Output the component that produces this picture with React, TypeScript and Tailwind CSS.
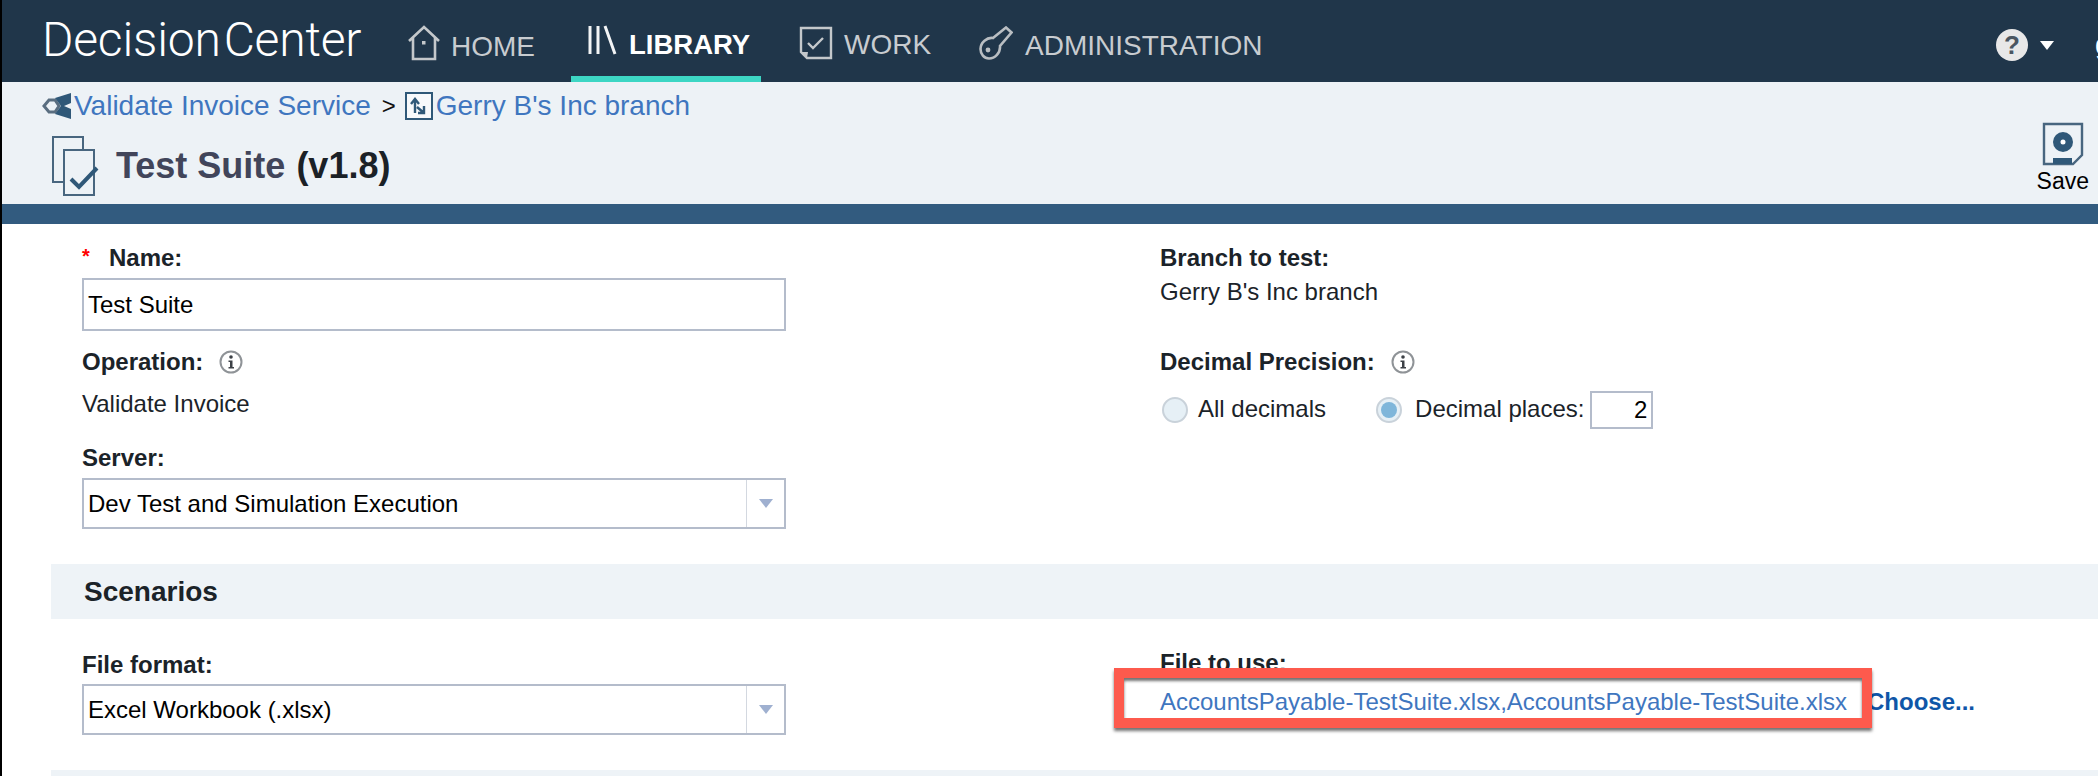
import React from "react";

const labelCls = "text-[24px] font-bold text-[#1b2329] leading-none";
const valueCls = "text-[24px] text-[#1b2329] leading-none";

const HomeIcon = () => (
  <svg width="34" height="36" viewBox="0 0 34 36" fill="none" stroke="#c4c8cb" strokeWidth="2.6">
    <path d="M2 16 L17 2 L32 16 M6 13 V34 H28 V13" />
    <rect x="15" y="16" width="3.5" height="3.5" fill="#c4c8cb" stroke="none" />
  </svg>
);

const LibraryIcon = () => (
  <svg width="30" height="30" viewBox="0 0 30 30" fill="none" stroke="#f2f4f5" strokeWidth="3">
    <path d="M3 1 V29 M11 1 V29 M18 1 L28 29" />
  </svg>
);

const WorkIcon = () => (
  <svg width="34" height="34" viewBox="0 0 34 34" fill="none" stroke="#c4c8cb" strokeWidth="2.4">
    <path d="M2 2 H32 V32 H8 L2 26 Z" />
    <path d="M9 26 L2 26 L8 32 Z" fill="#c4c8cb" stroke="none" />
    <path d="M9 17 L14 22 L24 12" />
  </svg>
);

const KeyIcon = () => (
  <svg width="34" height="34" viewBox="0 0 34 34" fill="none" stroke="#b9bec2" strokeWidth="2.6">
    <path d="M14 12 L27 1.5 L32.5 6.5 L21 20 C21.5 27 16 32.5 10 32.5 C5 32.5 1.5 28 1.5 23 C1.5 16.5 8 11 14 12 Z" />
    <circle cx="9" cy="24" r="2.4" fill="#b9bec2" stroke="none" />
  </svg>
);

const InfoIcon = () => (
  <svg width="24" height="24" viewBox="0 0 24 24" fill="none">
    <circle cx="12" cy="12" r="10.5" stroke="#8f9397" strokeWidth="2" />
    <circle cx="12" cy="7" r="1.8" fill="#3c4046" />
    <path d="M9.5 10.5 H13.5 V17 H15 V18.5 H9.5 V17 H11 V12 H9.5 Z" fill="#3c4046" />
  </svg>
);

const Radio = ({checked}: {checked?: boolean}) => (
  <span className="flex h-[26px] w-[26px] items-center justify-center rounded-full border-2 border-[#c9d2da] bg-[#e6f0f6]">
    {checked && <span className="h-[16px] w-[16px] rounded-full bg-[#7fb6da]" />}
  </span>
);

const Select = ({value}: {value: string}) => (
  <div className="flex h-[51px] w-[704px] items-stretch border-2 border-[#b4bccb] bg-white">
    <span className={`${valueCls} flex flex-1 items-center pl-[4px] !text-black`}>{value}</span>
    <span className="flex w-[38px] items-center justify-center border-l border-[#d3d8e0]">
      <span className="h-0 w-0 border-x-[7px] border-t-[9px] border-x-transparent border-t-[#9fb0d0]" />
    </span>
  </div>
);

export default function App() {
  return (
    <div className="relative h-[776px] w-[2098px] overflow-hidden border-l-2 border-black bg-white font-['Liberation_Sans',Arial,sans-serif]">
      <header className="flex h-[82px] items-stretch bg-[#20364a]">
        <div className="ml-[40px] mt-[12px] w-[323px] font-['Roboto',sans-serif] text-[48px] font-light leading-[56px] tracking-[-0.2px] whitespace-nowrap text-white">
          Decision<span className="ml-[3px]">Center</span>
        </div>
        <nav className="ml-[42px] flex items-stretch text-[28px] text-[#c8ccd0]">
          <a className="flex w-[164px] items-center gap-[10px] pt-[3px]">
            <HomeIcon />
            <span className="pt-[9px]">HOME</span>
          </a>
          <a className="flex w-[190px] items-center gap-[12px] border-b-[6px] border-[#3dd6c4] pl-[16px] pt-[3px] text-[27.5px] font-bold text-white">
            <LibraryIcon />
            <span className="pt-[11px]">LIBRARY</span>
          </a>
          <a className="ml-[38px] flex w-[180px] items-center gap-[11px] pt-[3px]">
            <WorkIcon />
            <span className="pt-[5px]">WORK</span>
          </a>
          <a className="flex items-center gap-[12px] pt-[3px]">
            <KeyIcon />
            <span className="pt-[7px]">ADMINISTRATION</span>
          </a>
        </nav>
        <div className="ml-auto flex items-center gap-[12px] pt-[8px]">
          <span className="flex h-[32px] w-[32px] items-center justify-center rounded-full bg-[#e8e8e8] text-[26px] font-bold text-[#4b5661]">?</span>
          <span className="h-0 w-0 border-x-[7px] border-t-[9px] border-x-transparent border-t-white" />
          <span className="ml-[29px] w-[3px] overflow-hidden text-[28px] text-white">g</span>
        </div>
      </header>

      <section className="relative h-[122px] bg-[#edf2f6]">
        <div className="flex h-[48px] items-center pl-[40px] text-[28px]">
          <svg width="30" height="28" viewBox="0 0 30 28" className="mr-[2px]">
            <path d="M2 14 L7 8 L13 8 L17 14 L13 20 L7 20 Z" fill="none" stroke="#5a6e80" strokeWidth="3" />
            <path d="M13 6 L29 1 V11 L22 14 L29 17 V27 L13 22 L19 14 Z" fill="#2f5878" />
          </svg>
          <a className="text-[#3f76bf]">Validate Invoice Service</a>
          <span className="ml-[11px] mr-[9px] text-[24px] text-[#111]">&gt;</span>
          <svg width="28" height="28" viewBox="0 0 28 28" className="mr-[3px]">
            <rect x="1" y="1" width="26" height="26" fill="#f7f9fb" stroke="#2f5878" strokeWidth="2" />
            <path d="M10 21 V8 M6 12 L10 7 L14 12 M12 15 L19 21 M19 14 V21 H13" fill="none" stroke="#2f5878" strokeWidth="2.4" />
          </svg>
          <a className="text-[#3f76bf]">Gerry B's Inc branch</a>
        </div>
        <div className="flex h-[70px] items-center pl-[49px] pt-[2px]">
          <svg width="50" height="62" viewBox="0 0 50 62" fill="none" stroke="#48667f" strokeWidth="2">
            <path d="M13 47 H2 V2 H32 V15" />
            <rect x="13" y="15" width="30" height="45" />
            <path d="M20 44 L28 52 L46 33" strokeWidth="4" stroke="#2f5878" />
          </svg>
          <span className="ml-[15px] text-[36px] font-bold text-[#41455a]">Test Suite</span>
          <span className="ml-[11px] text-[36px] font-bold text-[#1b2126]">(v1.8)</span>
        </div>
        <div className="absolute right-[9px] top-[40px] flex flex-col items-center">
          <svg width="42" height="44" viewBox="0 0 42 44" fill="none">
            <path d="M2 2 H40 V33 L31 42 H2 Z" stroke="#48667f" strokeWidth="2.4" />
            <circle cx="21" cy="20" r="10" fill="#2f5878" />
            <circle cx="21" cy="20" r="2.5" fill="#fff" />
            <rect x="11" y="36" width="19" height="6" fill="#2f5878" />
          </svg>
          <span className="mt-[3px] text-[23px] leading-[24px] text-black">Save</span>
        </div>
      </section>

      <div className="h-[20px] bg-[#325b7f]" />

      <main>
        <div className="grid h-[340px] grid-cols-[1158px_1fr]">
          <div className="pl-[80px] pt-[24px]">
            <div className="flex h-[20px] items-center">
              <span className="mt-[-4px] w-[27px] text-[20px] font-bold leading-none text-[#f00]">*</span>
              <span className={labelCls}>Name:</span>
            </div>
            <div className={`${valueCls} mt-[10px] flex h-[53px] w-[704px] items-center border-2 border-[#b4bccb] pl-[4px] !text-black`}>Test Suite</div>
            <div className="mt-[19px] flex h-[24px] items-center gap-[16px]">
              <span className={labelCls}>Operation:</span>
              <InfoIcon />
            </div>
            <div className={`${valueCls} mt-[18px]`}>Validate Invoice</div>
            <div className={`${labelCls} mt-[30px]`}>Server:</div>
            <div className="mt-[8px]">
              <Select value="Dev Test and Simulation Execution" />
            </div>
          </div>
          <div className="pt-[22px]">
            <div className={labelCls}>Branch to test:</div>
            <div className={`${valueCls} mt-[10px]`}>Gerry B's Inc branch</div>
            <div className="mt-[46px] flex h-[24px] items-center gap-[16px]">
              <span className={labelCls}>Decimal Precision:</span>
              <InfoIcon />
            </div>
            <div className="mt-[17px] flex h-[38px] items-center pl-[2px]">
              <Radio />
              <span className={`${valueCls} ml-[10px] pb-[2px]`}>All decimals</span>
              <span className="ml-[50px]"><Radio checked /></span>
              <span className={`${valueCls} ml-[13px] pb-[2px]`}>Decimal places:</span>
              <span className="ml-[6px] flex h-[38px] w-[63px] items-center justify-end border-2 border-[#b4bccb] pr-[4px] text-[24px] text-black">2</span>
            </div>
          </div>
        </div>

        <div className="ml-[49px] flex h-[55px] items-center bg-[#eef3f7] pl-[33px] text-[28px] font-bold text-[#1b2329]">Scenarios</div>

        <div className="grid h-[151px] grid-cols-[1158px_1fr]">
          <div className="pl-[80px] pt-[34px]">
            <div className={labelCls}>File format:</div>
            <div className="mt-[7px]">
              <Select value="Excel Workbook (.xlsx)" />
            </div>
          </div>
          <div className="pt-[32px]">
            <div className={labelCls}>File to use:</div>
            <div className="mt-[15px] flex h-[24px] items-center">
              <a className="text-[24px] leading-none text-[#3f76bf]">AccountsPayable-TestSuite.xlsx,AccountsPayable-TestSuite.xlsx</a>
              <a className="ml-[20px] text-[24px] font-bold leading-none text-[#0f56a8]">Choose...</a>
            </div>
          </div>
        </div>

        <div className="ml-[49px] h-[6px] bg-[#eef3f7]" />
      </main>

      {/* annotation drawn over the file field */}
      <div className="absolute left-[1112px] top-[668px] h-[60px] w-[758px] border-[10px] border-[#fd5a4d] shadow-[0_3px_3px_rgba(0,0,0,0.55),inset_0_3px_3px_rgba(0,0,0,0.55)]" />
    </div>
  );
}
